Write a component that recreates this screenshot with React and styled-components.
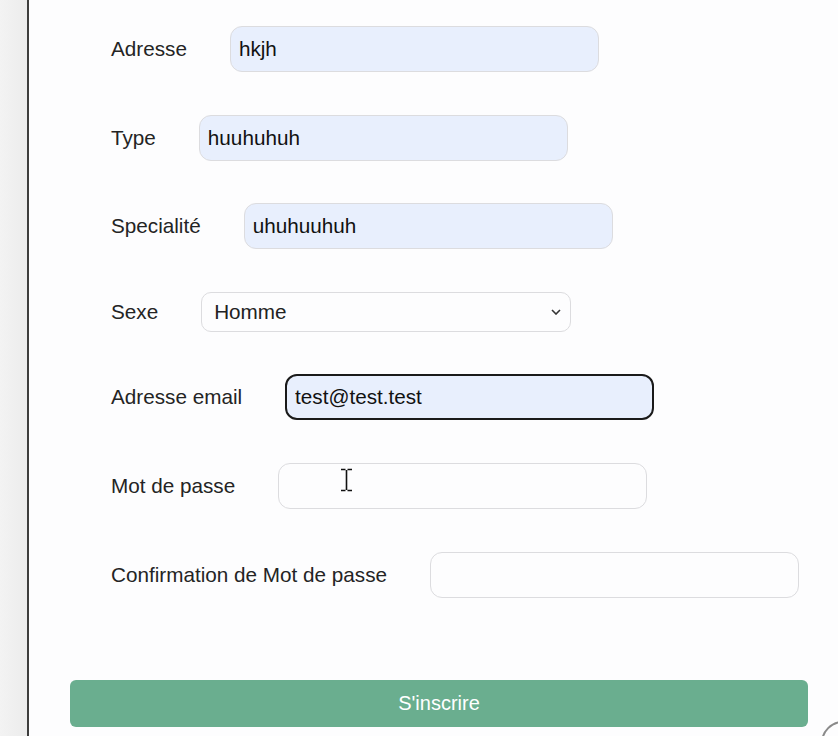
import React from 'react';
import styled, { createGlobalStyle } from 'styled-components';

const GlobalStyle = createGlobalStyle`
  html, body {
    margin: 0;
    padding: 0;
    height: 736px;
    overflow: hidden;
    background: #fdfdfe;
    font-family: "Liberation Sans", Arial, sans-serif;
  }
`;

const Page = styled.div`
  display: flex;
  height: 736px;
  position: relative;
`;

const SideStrip = styled.div`
  width: 27px;
  flex-shrink: 0;
  background: linear-gradient(to right, #f3f3f3, #ececec);
  border-right: 2px solid #3d3d3d;
`;

const Panel = styled.div`
  flex: 1;
  padding: 26px 30px 0 41px;
  background: #fdfdfe;
`;

const Form = styled.form`
  display: flex;
  flex-direction: column;
  margin: 0;
`;

const Fields = styled.div`
  display: flex;
  flex-direction: column;
  gap: 42.6px;
  padding-left: 41px;
`;

const Row = styled.div`
  display: flex;
  align-items: center;
  gap: 43px;
`;

const Label = styled.label`
  font-size: 20.7px;
  line-height: 24px;
  color: #242424;
  white-space: nowrap;
`;

const Input = styled.input`
  box-sizing: border-box;
  width: 369px;
  height: 46px;
  padding: 0 8px;
  font-family: "Liberation Sans", Arial, sans-serif;
  font-size: 20.7px;
  color: #111;
  border-radius: 12px;
  outline: none;
  background: ${p => (p.$filled ? '#e8effd' : '#fdfdfe')};
  border: ${p => (p.$focused ? '2px solid #1a1a1a' : '1px solid #dcdcdf')};
`;

const SelectWrap = styled.div`
  position: relative;
  display: flex;
`;

const Select = styled.select`
  box-sizing: border-box;
  width: 370px;
  height: 40px;
  padding: 0 12px;
  appearance: none;
  font-family: "Liberation Sans", Arial, sans-serif;
  font-size: 20.7px;
  color: #222;
  background: #fdfdfe;
  border: 1px solid #dcdcdf;
  border-radius: 10px;
  outline: none;
`;

const Chevron = styled.svg`
  position: absolute;
  right: 10px;
  top: 17px;
  pointer-events: none;
`;

const SubmitButton = styled.button`
  margin-top: 82px;
  height: 47px;
  width: 738px;
  border: none;
  border-radius: 6px;
  background: #6aae8f;
  color: #fff;
  font-family: "Liberation Sans", Arial, sans-serif;
  font-size: 20px;
  cursor: pointer;
`;

const TextCursor = styled.svg`
  position: absolute;
  left: 340px;
  top: 468px;
`;

const FloatingCircle = styled.div`
  position: absolute;
  left: 821px;
  top: 721px;
  width: 40px;
  height: 40px;
  border-radius: 50%;
  border: 2px solid #8a8a8a;
  background: #fdfdfe;
`;

const fields = [
  { label: 'Adresse', value: 'hkjh', filled: true },
  { label: 'Type', value: 'huuhuhuh', filled: true },
  { label: 'Specialité', value: 'uhuhuuhuh', filled: true },
  { label: 'Sexe', select: true },
  { label: 'Adresse email', value: 'test@test.test', filled: true, focused: true },
  { label: 'Mot de passe', value: '', type: 'password' },
  { label: 'Confirmation de Mot de passe', value: '', type: 'password' },
];

const App = () => (
  <>
    <GlobalStyle />
    <Page>
      <SideStrip />
      <Panel>
        <Form onSubmit={e => e.preventDefault()}>
          <Fields>
            {fields.map(f => (
              <Row key={f.label}>
                <Label>{f.label}</Label>
                {f.select ? (
                  <SelectWrap>
                    <Select defaultValue="Homme">
                      <option>Homme</option>
                      <option>Femme</option>
                    </Select>
                    <Chevron width="10" height="6" viewBox="0 0 10 6">
                      <path d="M1 1l4 4 4-4" stroke="#333" strokeWidth="1.6" fill="none" />
                    </Chevron>
                  </SelectWrap>
                ) : (
                  <Input
                    type={f.type || 'text'}
                    defaultValue={f.value}
                    $filled={f.filled}
                    $focused={f.focused}
                  />
                )}
              </Row>
            ))}
          </Fields>
          <SubmitButton type="submit">S'inscrire</SubmitButton>
        </Form>
      </Panel>
      <TextCursor width="13" height="24" viewBox="0 0 13 24">
        <path d="M1 1.5h4.5M7.5 1.5H12M6.5 2v20M1 22.5h4.5M7.5 22.5H12" stroke="#111" strokeWidth="1.6" fill="none" />
      </TextCursor>
      <FloatingCircle />
    </Page>
  </>
);

export default App;
